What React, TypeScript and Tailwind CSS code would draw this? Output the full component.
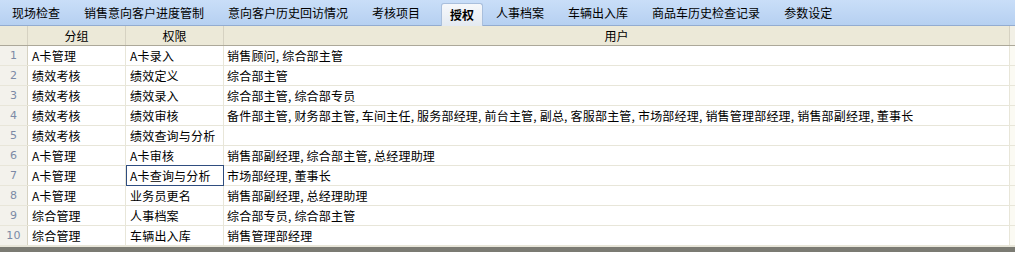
import React from "react";

const tabs = [
  "现场检查",
  "销售意向客户进度管制",
  "意向客户历史回访情况",
  "考核项目",
  "授权",
  "人事档案",
  "车辆出入库",
  "商品车历史检查记录",
  "参数设定",
];

const rows = [
  ["A卡管理", "A卡录入", "销售顾问, 综合部主管"],
  ["绩效考核", "绩效定义", "综合部主管"],
  ["绩效考核", "绩效录入", "综合部主管, 综合部专员"],
  ["绩效考核", "绩效审核", "备件部主管, 财务部主管, 车间主任, 服务部经理, 前台主管, 副总, 客服部主管, 市场部经理, 销售管理部经理, 销售部副经理, 董事长"],
  ["绩效考核", "绩效查询与分析", ""],
  ["A卡管理", "A卡审核", "销售部副经理, 综合部主管, 总经理助理"],
  ["A卡管理", "A卡查询与分析", "市场部经理, 董事长"],
  ["A卡管理", "业务员更名", "销售部副经理, 总经理助理"],
  ["综合管理", "人事档案", "综合部专员, 综合部主管"],
  ["综合管理", "车辆出入库", "销售管理部经理"],
];

const font = {
  fontFamily: '"Noto Sans CJK SC", "Liberation Sans", sans-serif',
};

export default function App() {
  return (
    <div className="w-[1015px] h-[253px] overflow-hidden bg-white text-[12px] text-black" style={font}>
      {/* 选项卡 */}
      <div className="h-[26px] flex items-end bg-gradient-to-b from-[#c9def8] to-[#b6d0f1] border-b border-[#93acd0]">
        {tabs.map((t) =>
          t === "授权" ? (
            <div
              key={t}
              className="h-[23px] -mb-px ml-[9px] mr-[1px] px-[8px] flex items-center font-bold rounded-t-[3px] border border-b-0 border-[#a9bfdc] bg-gradient-to-b from-[#f6f8fb] to-[#e4eaf1] leading-none"
            >
              {t}
            </div>
          ) : (
            <div key={t} className="h-[25px] px-[12px] flex items-center leading-none whitespace-nowrap">
              {t}
            </div>
          )
        )}
      </div>

      {/* 表头 */}
      <div className="flex h-[20px] bg-[#ece9d8] border-b border-[#aca899] leading-none">
        <div className="w-[28px] border-r border-[#d6d2c2]" />
        <div className="w-[98px] border-r border-[#d6d2c2] flex items-center justify-center">分组</div>
        <div className="w-[98px] border-r border-[#d6d2c2] flex items-center justify-center">权限</div>
        <div className="w-[786px] border-r border-[#d6d2c2] flex items-center justify-center">用户</div>
        <div className="flex-1 bg-[#f2f0e6]" />
      </div>

      {/* 数据行 */}
      <div className="tracking-[0.2px]">
        {rows.map((r, i) => (
          <div key={i} className="flex h-[20px] border-b border-[#e8e6d9] leading-none">
            <div className="w-[28px] border-r border-[#d6d2c2] bg-[#f3f2ec] flex items-center justify-center text-[11px] text-[#7c8aa6]" style={{ fontFamily: '"DejaVu Sans", sans-serif' }}>
              {i + 1}
            </div>
            <div className="w-[98px] border-r border-[#e8e6d9] flex items-center pl-[4px]">{r[0]}</div>
            <div
              className={
                i === 6
                  ? "w-[98px] border border-[#2f4d7f] -my-px flex items-center pl-[3px]"
                  : "w-[98px] border-r border-[#e8e6d9] flex items-center pl-[4px]"
              }
            >
              {r[1]}
            </div>
            <div className="w-[786px] border-r border-[#e8e6d9] flex items-center pl-[3px] whitespace-nowrap">{r[2]}</div>
            <div className="flex-1 bg-[#fbfaf3]" />
          </div>
        ))}
      </div>

      <div className="h-[6px] border-t border-[#e8e6d9] bg-[#7b7b73]" />
    </div>
  );
}
